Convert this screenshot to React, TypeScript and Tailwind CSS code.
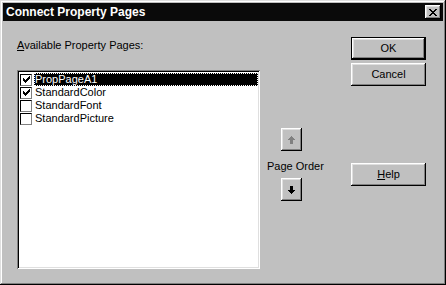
import React from "react";

function Check() {
  return (
    <svg width="7" height="7" viewBox="0 0 7 7" shapeRendering="crispEdges">
      <path d="M0 2h1v3h-1z M1 3h1v3h-1z M2 4h1v3h-1z M3 3h1v3h-1z M4 2h1v3h-1z M5 1h1v3h-1z M6 0h1v3h-1z" fill="#000" />
    </svg>
  );
}

function Box({ checked }: { checked: boolean }) {
  return (
    <div className="w-[12px] h-[12px] shrink-0 bg-white border border-t-[#000] border-l-[#000] border-r-[#808080] border-b-[#808080] flex items-center justify-center">
      {checked ? <Check /> : null}
    </div>
  );
}

function Row({ label, checked, selected }: { label: string; checked: boolean; selected?: boolean }) {
  return (
    <div className="flex items-center h-[13px]">
      <div className="ml-px">
        <Box checked={checked} />
      </div>
      {selected ? (
        <span className="ml-[2px] flex-1 h-[13px] flex items-center bg-black text-white border border-dotted border-white leading-[11px]">
          {label}
        </span>
      ) : (
        <span className="ml-[2px] pl-px flex-1 h-[13px] flex items-center leading-[11px]">{label}</span>
      )}
    </div>
  );
}

function UpArrow({ color }: { color: string }) {
  return (
    <svg width="7" height="8" viewBox="0 0 7 8" shapeRendering="crispEdges">
      <path d="M3 0h1v1h-1z M2 1h3v1h-3z M1 2h5v1h-5z M0 3h7v1h-7z M2 4h3v4h-3z" fill={color} />
    </svg>
  );
}

function DownArrow({ color }: { color: string }) {
  return (
    <svg width="7" height="8" viewBox="0 0 7 8" shapeRendering="crispEdges">
      <path d="M2 0h3v4h-3z M0 4h7v1h-7z M1 5h5v1h-5z M2 6h3v1h-3z M3 7h1v1h-1z" fill={color} />
    </svg>
  );
}

export default function App() {
  return (
    <div className="w-[446px] h-[285px] bg-[#c0c0c0] font-['Liberation_Sans',Arial,sans-serif] text-[11px] text-black p-[2px] shadow-[inset_-1px_-1px_#000,inset_1px_1px_#dfdfdf,inset_-2px_-2px_#808080,inset_2px_2px_#fff] flex flex-col">
      <div className="mx-px mt-px h-[18px] bg-[#0a0a0a] flex items-center justify-between pl-[3px] pr-[2px]">
        <span className="text-white font-bold text-[12px] leading-[14px]">Connect Property Pages</span>
        <div className="w-[16px] h-[14px] bg-[#c0c0c0] shadow-[inset_-1px_-1px_#000,inset_1px_1px_#fff,inset_-2px_-2px_#808080,inset_2px_2px_#dfdfdf] flex items-center justify-center">
          <svg width="8" height="7" viewBox="0 0 8 7" shapeRendering="crispEdges">
            <path d="M0 0h2v1h-2z M6 0h2v1h-2z M1 1h2v1h-2z M5 1h2v1h-2z M2 2h4v1h-4z M3 3h2v1h-2z M2 4h4v1h-4z M1 5h2v1h-2z M5 5h2v1h-2z M0 6h2v1h-2z M6 6h2v1h-2z" fill="#000" />
          </svg>
        </div>
      </div>
      <div className="flex-1 flex items-start mx-px">
        <div className="ml-[14px] mt-[18px] flex flex-col">
          <div className="leading-[13px] h-[13px]">
            <span className="underline underline-offset-[1px]">A</span>vailable Property Pages:
          </div>
          <div className="mt-[18px] w-[243px] h-[199px] bg-white shadow-[inset_1px_1px_#808080,inset_-1px_-1px_#fff,inset_2px_2px_#000,inset_-2px_-2px_#dfdfdf] p-[2px] pt-[3px] flex flex-col">
            <Row label="PropPageA1" checked selected />
            <Row label="StandardColor" checked />
            <Row label="StandardFont" checked={false} />
            <Row label="StandardPicture" checked={false} />
          </div>
        </div>
        <div className="ml-[7px] mt-[107px] w-[54px] flex flex-col">
          <div className="ml-[14px] w-[21px] h-[23px] shadow-[inset_-1px_-1px_#000,inset_1px_1px_#fff,inset_-2px_-2px_#808080,inset_2px_2px_#dfdfdf] flex items-center justify-center">
            <UpArrow color="#808080" />
          </div>
          <div className="mt-[9px] leading-[13px] h-[13px] text-center whitespace-nowrap">Page Order</div>
          <div className="mt-[5px] ml-[14px] w-[21px] h-[23px] shadow-[inset_-1px_-1px_#000,inset_1px_1px_#fff,inset_-2px_-2px_#808080,inset_2px_2px_#dfdfdf] flex items-center justify-center">
            <DownArrow color="#000" />
          </div>
        </div>
        <div className="ml-[30px] mt-[16px] w-[75px] flex flex-col">
          <div className="h-[23px] border border-black shadow-[inset_-1px_-1px_#000,inset_1px_1px_#fff,inset_-2px_-2px_#808080,inset_2px_2px_#dfdfdf] flex items-center justify-center leading-[13px]">
            OK
          </div>
          <div className="mt-[3px] h-[23px] shadow-[inset_-1px_-1px_#000,inset_1px_1px_#fff,inset_-2px_-2px_#808080,inset_2px_2px_#dfdfdf] flex items-center justify-center leading-[13px]">
            Cancel
          </div>
          <div className="mt-[77px] h-[23px] shadow-[inset_-1px_-1px_#000,inset_1px_1px_#fff,inset_-2px_-2px_#808080,inset_2px_2px_#dfdfdf] flex items-center justify-center leading-[13px]">
            <span>
              <span className="underline underline-offset-[1px]">H</span>elp
            </span>
          </div>
        </div>
      </div>
    </div>
  );
}
